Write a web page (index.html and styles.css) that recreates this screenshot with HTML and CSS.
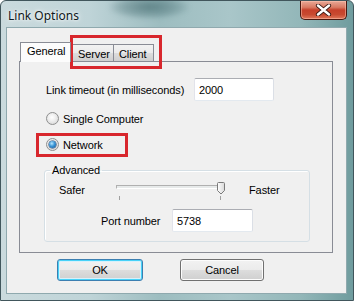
FILE: index.html
```html
<!DOCTYPE html>
<html>
<head>
<meta charset="utf-8">
<link rel="stylesheet" href="styles.css">
</head>
<body>
<div class="window">
  <span class="behind"></span>
  <div class="titlebar">
    <span class="title">Link Options</span>
    <div class="close">
      <svg width="17" height="12" viewBox="0 0 17 12">
        <path d="M3 1.5 L14 10.5 M14 1.5 L3 10.5" stroke="#3b1a14" stroke-width="4.2" stroke-linecap="round"/>
        <path d="M3 1.5 L14 10.5 M14 1.5 L3 10.5" stroke="#ffffff" stroke-width="2.4" stroke-linecap="round"/>
      </svg>
    </div>
  </div>
  <div class="client">
    <div class="tabs">
      <div class="tab active">General</div>
      <div class="tab">Server</div>
      <div class="tab">Client</div>
    </div>
    <div class="panel">
      <div class="timeout-row">
        <span class="timeout-label">Link timeout (in milliseconds)</span>
        <div class="field field-timeout">2000</div>
      </div>
      <div class="radio radio-first"><span class="rb"></span>Single Computer</div>
      <div class="radio"><span class="rb on"></span>Network</div>
      <fieldset class="group">
        <legend>Advanced</legend>
        <div class="slider-row">
          <span class="safer">Safer</span>
          <div class="slider">
            <div class="track"></div>
            <svg class="thumb" width="8" height="13" viewBox="0 0 8 13">
              <defs>
                <linearGradient id="tg" x1="0" y1="0" x2="1" y2="0">
                  <stop offset="0" stop-color="#ffffff"/>
                  <stop offset="1" stop-color="#d8d8d8"/>
                </linearGradient>
              </defs>
              <path d="M1.5 0.5 H6.5 Q7.5 0.5 7.5 1.5 V8.5 L4 12 L0.5 8.5 V1.5 Q0.5 0.5 1.5 0.5 Z" fill="url(#tg)" stroke="#7a7a7a"/>
            </svg>
            <span class="tick tick-l"></span>
            <span class="tick tick-r"></span>
          </div>
          <span class="faster">Faster</span>
        </div>
        <div class="port-row">
          <span class="port-label">Port number</span>
          <div class="field field-port">5738</div>
        </div>
      </fieldset>
    </div>
    <div class="buttons">
      <div class="btn btn-default">OK</div>
      <div class="btn btn-cancel">Cancel</div>
    </div>
  </div>
  <div class="mark mark-tabs"></div>
  <div class="mark mark-net"></div>
</div>
</body>
</html>
```
FILE: styles.css
```css
html, body {
  margin: 0;
  padding: 0;
  background: #ffffff;
}
.window {
  position: relative;
  width: 354px;
  height: 301px;
  box-sizing: border-box;
  border: 1px solid #41565c;
  border-radius: 6px 6px 0 0;
  padding: 0 7px 7px 6px;
  background: linear-gradient(90deg, #cadadd 0%, #bfd4d8 25%, #9dbdc0 45%, #a9c6c9 65%, #93b7b9 85%, #6f9c9e 100%);
  overflow: hidden;
  font-family: "Liberation Sans", Arial, sans-serif;
  font-size: 11px;
  letter-spacing: -0.1px;
  color: #000;
}
.behind {
  position: absolute;
  left: 108px;
  top: -6px;
  width: 80px;
  height: 24px;
  border-radius: 40%;
  background: radial-gradient(ellipse at center, rgba(45, 85, 90, 0.55) 0%, rgba(60, 100, 105, 0.3) 50%, rgba(60, 100, 105, 0) 75%);
  filter: blur(2px);
}
.titlebar {
  position: relative;
  height: 27px;
  display: flex;
  justify-content: space-between;
  align-items: flex-start;
}
.title {
  margin-top: 6px;
  padding-left: 1px;
  font-family: "Noto Sans", sans-serif;
  font-size: 12px;
  letter-spacing: 0;
  color: #101820;
  text-shadow: 0 0 6px #ffffff, 0 0 3px #ffffff;
}
.close {
  width: 47px;
  height: 19px;
  margin-right: -1px;
  box-sizing: border-box;
  border: 1px solid #4a1810;
  border-top: none;
  border-radius: 0 0 5px 5px;
  background: linear-gradient(180deg, #e9a997 0%, #d97a63 35%, #c6402a 50%, #c84a30 75%, #e0785c 100%);
  box-shadow: inset 0 0 0 1px rgba(255, 200, 180, 0.5);
  display: flex;
  align-items: center;
  justify-content: center;
}
.client {
  height: 265px;
  box-sizing: border-box;
  background: #f0f0f0;
  padding: 14px 0 0 12px;
  box-shadow: 0 0 0 1px #8fa9ae;
}
.tabs {
  display: flex;
  align-items: flex-end;
  height: 19px;
  padding-left: 1px;
}
.tab {
  height: 17px;
  box-sizing: border-box;
  border: 1px solid #898c95;
  border-bottom: none;
  padding: 1px 5px 0;
  display: flex;
  align-items: center;
  background: linear-gradient(180deg, #f2f2f2 0%, #ebebeb 50%, #dddddd 51%, #cfcfcf 100%);
  margin-left: -1px;
}
.tab:nth-child(2) {
  margin-left: 1px;
  width: 42px;
}
.tab:nth-child(3) {
  width: 41px;
}
.tab.active {
  height: 20px;
  width: 51px;
  margin-left: 0;
  margin-bottom: -1px;
  background: #fcfcfc;
  position: relative;
  z-index: 1;
  padding: 0 0 3px 6px;
}
.panel {
  width: 314px;
  height: 192px;
  box-sizing: border-box;
  border: 1px solid #898c95;
  padding: 16px 0 0 26px;
}
.timeout-row {
  display: flex;
  align-items: center;
  height: 23px;
}
.timeout-label {
  width: 148px;
}
.field {
  box-sizing: border-box;
  height: 23px;
  background: #ffffff;
  border: 1px solid #abadb3;
  border-left-color: #e2e3ea;
  border-bottom-color: #e3e9ef;
  border-right-color: #dbdfe6;
  border-radius: 2px;
  padding: 0 4px;
  display: flex;
  align-items: center;
}
.field-timeout {
  width: 80px;
}
.radio {
  display: flex;
  align-items: center;
  height: 13px;
  margin-top: 13px;
}
.radio-first {
  margin-top: 11px;
}
.rb {
  width: 13px;
  height: 13px;
  box-sizing: border-box;
  border-radius: 50%;
  border: 1px solid #8e8f8f;
  background: radial-gradient(circle at 45% 40%, #ffffff 0%, #f1f1f1 35%, #d0d0d0 100%);
  margin-right: 4px;
  display: flex;
  align-items: center;
  justify-content: center;
}
.rb.on::after {
  content: "";
  width: 7px;
  height: 7px;
  border-radius: 50%;
  background: radial-gradient(circle at 40% 35%, #b9e8ff 0%, #3a95d6 45%, #0c4f91 100%);
  box-shadow: 0 0 0 0.5px #1c3c6a;
}
.group {
  margin: 13px 0 0 -2px;
  width: 266px;
  height: 78px;
  box-sizing: border-box;
  padding: 0;
  border: 1px solid #d5dfe5;
  border-radius: 3px;
  box-shadow: inset 1px 1px 0 #ffffff;
}
.group legend {
  margin-left: 5px;
  padding: 0 2px;
  font-family: "Liberation Sans", Arial, sans-serif;
  font-size: 11px;
}
.slider-row {
  display: flex;
  align-items: center;
  height: 18px;
  margin-top: 5px;
  padding-left: 14px;
}
.safer {
  width: 57px;
}
.slider {
  position: relative;
  width: 108px;
  height: 18px;
}
.track {
  position: absolute;
  left: 0;
  top: 4px;
  width: 106px;
  height: 2px;
  border: 1px solid #b0b0b0;
  border-bottom-color: #ffffff;
  border-right-color: #ffffff;
  background: #e7eaea;
}
.thumb {
  position: absolute;
  left: 101px;
  top: 1px;
}
.tick {
  position: absolute;
  top: 15px;
  width: 1px;
  height: 4px;
  background: #a0a0a0;
}
.tick-l { left: 3px; }
.tick-r { left: 104px; }
.faster {
  margin-left: 25px;
}
.port-row {
  display: flex;
  align-items: center;
  height: 23px;
  margin-top: 10px;
  padding-left: 56px;
}
.port-label {
  width: 71px;
}
.field-port {
  width: 81px;
}
.buttons {
  display: flex;
  margin-top: 6px;
  padding-left: 38px;
}
.btn {
  width: 86px;
  height: 22px;
  box-sizing: border-box;
  border: 1px solid #707070;
  border-radius: 3px;
  background: linear-gradient(180deg, #f2f2f2 0%, #ebebeb 50%, #dddddd 51%, #cfcfcf 100%);
  box-shadow: inset 0 0 0 1px #fcfcfc;
  display: flex;
  align-items: center;
  justify-content: center;
}
.btn-default {
  border-color: #3c7fb1;
  box-shadow: inset 0 0 0 1px #48d2f8, inset 0 0 0 2px #d7f1fb;
}
.btn-cancel {
  width: 84px;
  margin-left: 37px;
}
.mark {
  position: absolute;
  border: 3px solid #d8272d;
  box-sizing: border-box;
}
.mark-tabs {
  left: 69px;
  top: 34px;
  width: 92px;
  height: 34px;
}
.mark-net {
  left: 35px;
  top: 132px;
  width: 92px;
  height: 24px;
}
```
